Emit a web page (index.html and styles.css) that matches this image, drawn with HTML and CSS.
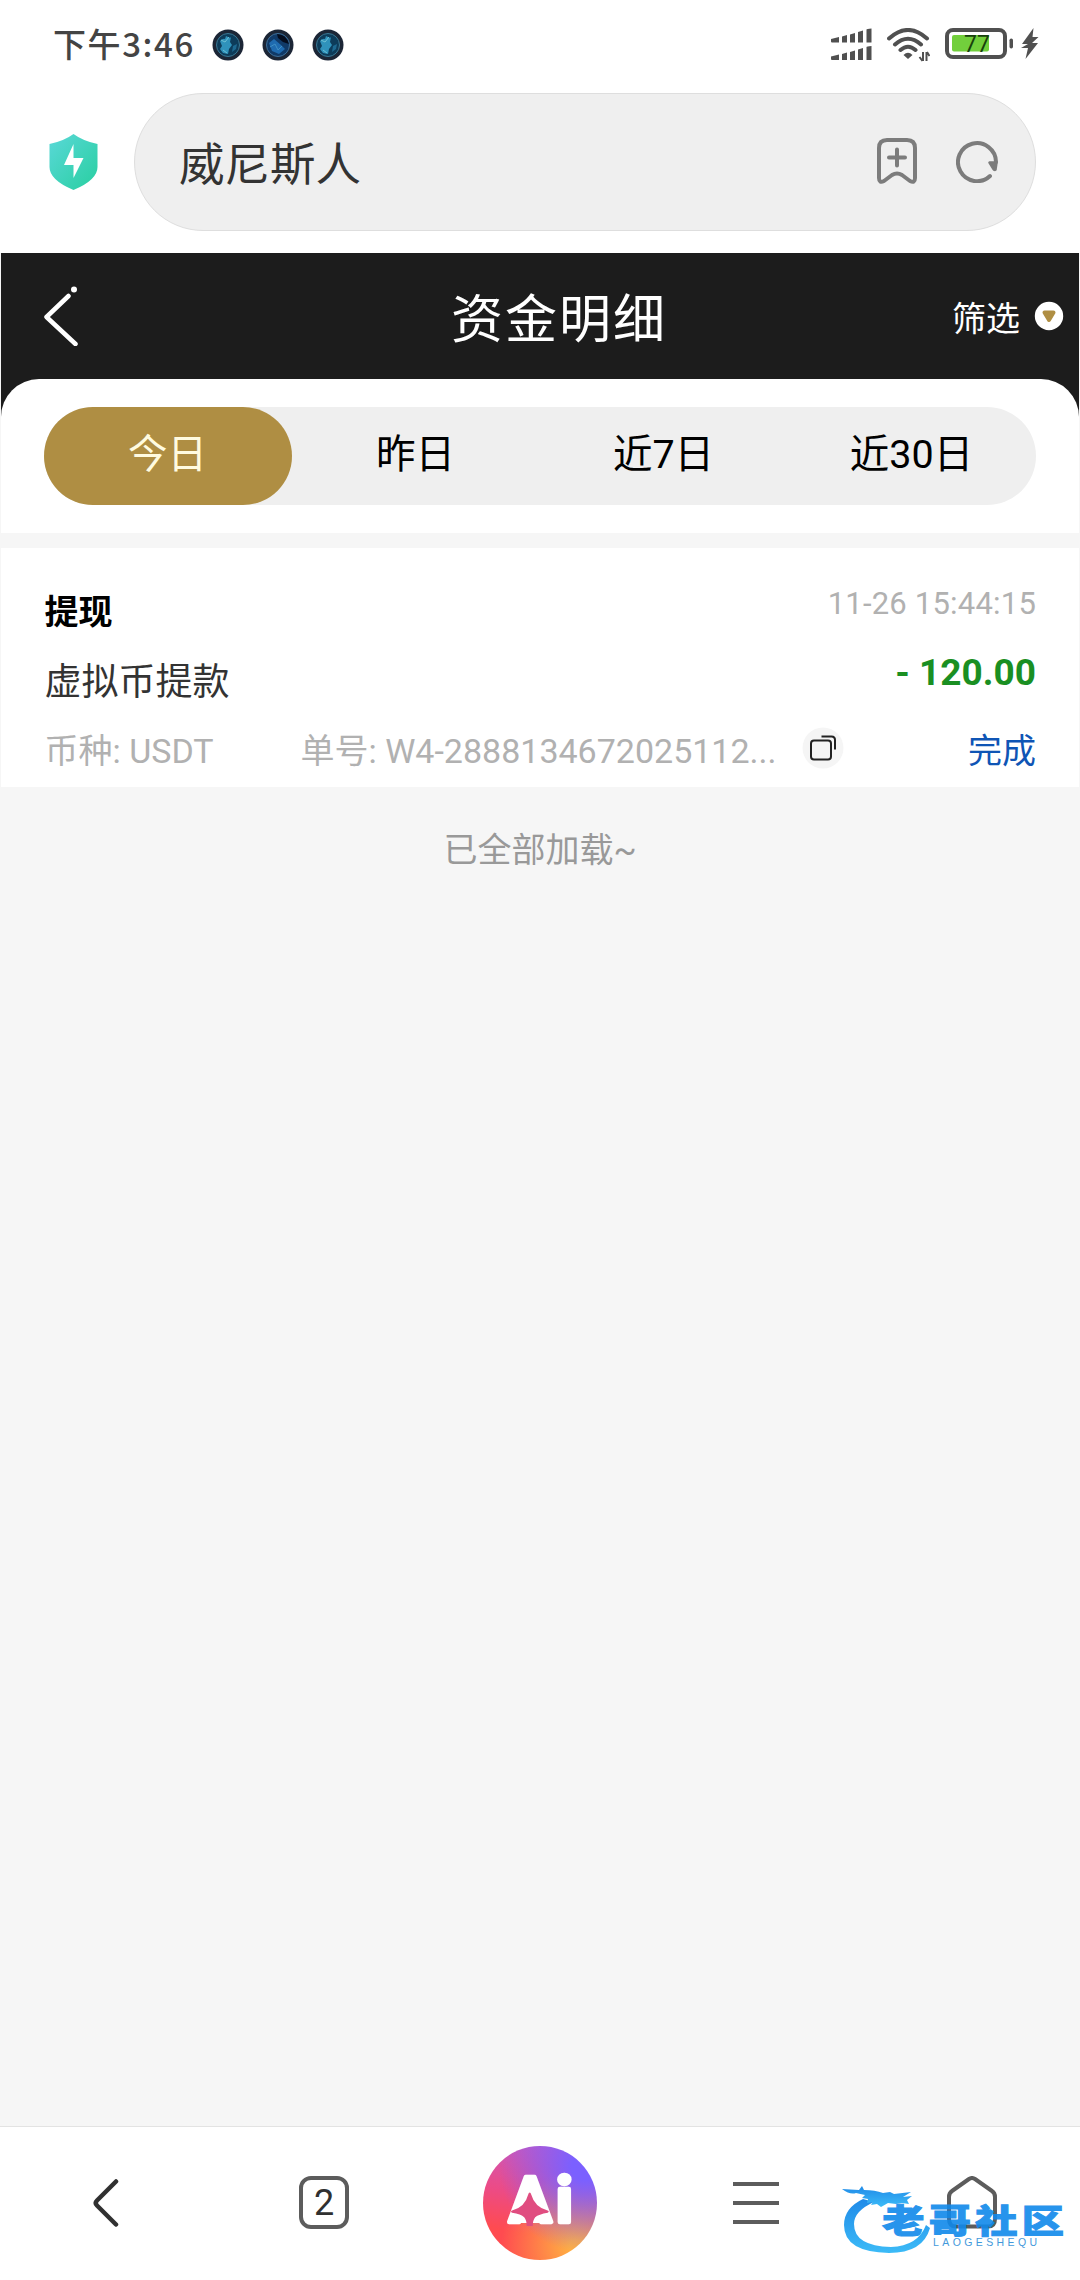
FILE: index.html
```
<!DOCTYPE html>
<html lang="zh-CN">
<head>
<meta charset="utf-8">
<title>资金明细</title>
<meta name="viewport" content="width=device-width,initial-scale=1">
<link rel="stylesheet" href="styles.css">
</head>
<body>
<div class="statusbar">
  <span class="time">下午3:46</span>
  <div class="notices">
    <svg class="coin" viewBox="0 0 32 32"><circle cx="16" cy="16" r="15.5" fill="#1c2636"/><circle cx="16" cy="16" r="11.5" fill="#0d3c5a" stroke="#3a7894" stroke-width="1"/><path d="M8 12q3-3 5-2l1-3 4 2 1-1-1 5 2 3-3 4-1 5-5-1-3-4 2-3z" fill="#2f92bb"/><path d="M21 17l4-2-1 5-4 3z" fill="#1d6890"/><path d="M9 11l4 2 4-5M11 21l4 3" stroke="#6cc0d4" fill="none"/></svg>
    <svg class="coin" viewBox="0 0 32 32"><circle cx="16" cy="16" r="15.5" fill="#1c2636"/><circle cx="16" cy="16" r="11.5" fill="#103a68" stroke="#3f6f98" stroke-width="1"/><path d="M15 5q9 0 12 10l-6-2-5-4z" fill="#050d1e"/><path d="M7 14l5-4 7 6 4 4-6 5-7-3z" fill="#1f6bb0"/><path d="M8 18l5-3 3 6 4-4" stroke="#3f8fc4" fill="none"/></svg>
    <svg class="coin" viewBox="0 0 32 32"><circle cx="16" cy="16" r="15.5" fill="#1c2636"/><circle cx="16" cy="16" r="11.5" fill="#0d3c5a" stroke="#3a7894" stroke-width="1"/><path d="M8 12q3-3 5-2l1-3 4 2 1-1-1 5 2 3-3 4-1 5-5-1-3-4 2-3z" fill="#2f92bb"/><path d="M21 17l4-2-1 5-4 3z" fill="#1d6890"/><path d="M9 11l4 2 4-5M11 21l4 3" stroke="#6cc0d4" fill="none"/></svg>
  </div>
  <div class="system">
    <svg class="signal" viewBox="0 0 41 32" fill="#505050">
      <path id="bars" d="M0 11l8-2v5.500H1q-1 0-1-1zM11 8.500l5-1.500v7.500h-5zM19 6.500l5-1.500v9.500h-5zM27 4l5-1.500v12h-5zM35.500 1.500q0-.5 5-1v14h-5z"/>
      <use href="#bars" y="17.500"/>
    </svg>
    <svg class="wifi" viewBox="0 0 43 34" fill="none" stroke="#505050" stroke-width="4" stroke-linecap="round">
      <path d="M2 10.500Q21 -6.500 40 10.500M8 16.500Q21 5 34 16.500M13.500 22Q21 15.500 28.500 22"/>
      <path d="M21 31l-4.500-4q4.500-4.500 9 0z" fill="#505050" stroke="none"/>
      <path d="M36 24v9M35.500 33l-3-4M39.500 33v-9M40 24l2.500 4" stroke-width="2" stroke-linecap="butt"/>
    </svg>
    <svg class="battery" viewBox="0 0 69 32">
      <rect x="2" y="2" width="58" height="27" rx="6" fill="none" stroke="#505050" stroke-width="4"/>
      <rect x="7" y="7" width="37" height="16.500" rx="2" fill="#72cf3c"/>
      <rect x="64.500" y="10.500" width="3.500" height="10" rx="1.700" fill="#505050"/>
      <text x="19" y="24" class="level">77</text>
    </svg>
    <svg class="charge" viewBox="0 0 18 32"><path d="M12.500 0L1 16h6L0 20h7L4.500 31 17 15h-6l6.500-6H11.500z" fill="#505050"/></svg>
  </div>
</div>

<div class="browser">
  <svg class="shield" viewBox="0 0 49 56">
    <defs><linearGradient id="mint" x1="0" y1="0" x2="1" y2="1"><stop offset="0" stop-color="#5ad8d8"/><stop offset="1" stop-color="#28cfa0"/></linearGradient></defs>
    <path d="M24.500 0Q34 7 48.500 10v23q0 13-24 23Q.5 46 .5 33V10Q15 7 24.500 0z" fill="url(#mint)"/>
    <path d="M24.500 10L15 31h9.500v13L34.500 24H24.500z" fill="#fff"/>
  </svg>
  <div class="address">
    <span>威尼斯人</span>
    <svg class="mark" viewBox="0 0 40 46" fill="none" stroke="#7c7c7c" stroke-width="4" stroke-linecap="round" stroke-linejoin="round">
      <path d="M2 10q0-8 8-8h20q8 0 8 8v30q0 5.500-5 3l-8-6q-5-3-10 0l-8 6q-5 2.500-5-3zM20 11.500v16M12 19.500h16"/>
    </svg>
    <svg class="reload" viewBox="0 0 43 43" fill="none" stroke="#7c7c7c" stroke-width="4" stroke-linecap="round">
      <path d="M34 36A19 19 0 1 1 40 22"/>
      <path d="M33.500 22.500h7l-1 7q-1 1-2-.5z" fill="#7c7c7c" stroke-width="2.500" stroke-linejoin="round"/>
    </svg>
  </div>
</div>

<main class="page">
  <header class="topbar">
    <svg class="back" viewBox="0 0 36 60" fill="none" stroke="#fff" stroke-width="4.500" stroke-linecap="round" stroke-linejoin="round"><path d="M25.500 10L3.500 31l29 27"/><circle cx="31" cy="3.500" r="3" fill="#fff" stroke="none"/></svg>
    <h1>资金明细</h1>
    <div class="filter">筛选
      <svg viewBox="0 0 30 30"><circle cx="15" cy="15" r="14.200" fill="#fff"/><path d="M10.500 11.500h9L15 19z" fill="#af8e43" stroke="#af8e43" stroke-width="4" stroke-linejoin="round"/></svg>
    </div>
  </header>
  <div class="tabs-wrap">
    <nav class="tabs">
      <a class="active">今日</a><a>昨日</a><a>近7日</a><a>近30日</a>
    </nav>
  </div>
  <section class="record">
    <div class="main">
      <div class="left">
        <div class="type">提现</div>
        <div class="desc">虚拟币提款</div>
      </div>
      <div class="right">
        <div class="date">11-26 15:44:15</div>
        <div class="amount">- 120.00</div>
      </div>
    </div>
    <div class="meta">
      <span class="coin-type">币种: USDT</span>
      <span class="order">单号: W4-2888134672025112...</span>
      <svg class="copy" viewBox="0 0 42 42"><circle cx="21" cy="21" r="20.500" fill="#f5f5f5"/><g fill="none" stroke="#222" stroke-width="2"><rect x="9" y="13.500" width="20" height="19" rx="3"/><path d="M19.500 9.500h10q3.500 0 3.500 3.500v9.500"/></g></svg>
      <span class="state">完成</span>
    </div>
  </section>
  <p class="end">已全部加载~</p>
</main>

<footer class="toolbar">
  <div><svg class="prev" viewBox="0 0 26 50" fill="none" stroke="#303030" stroke-width="4.500" stroke-linecap="round"><path d="M23 3.500L4 22.500q-2.500 2.500 0 5L23 46.500"/></svg></div>
  <div><span class="count">2</span></div>
  <div>
    <div class="ai">
      <svg viewBox="0 0 114 114">
        <path d="M46.700 36L28 77h38z" fill="#fff"/>
        <text x="26" y="76" class="ai-text">A</text>
        <text x="73" y="76" class="ai-text">i</text>
        <path d="M46.700 46.500q1 0 1.500 2 3.500 13 17 16.200 1.500 1-.5 2-9 1.500-12.500 4.500-2.500 3-2.500 8.800h-6q0-5.800-2.500-8.800Q38 68 29 66.700q-2-1-.5-2 13.500-3.200 16.700-16.200.5-2 1.500-2z" fill="#e04d80"/>
      </svg>
    </div>
  </div>
  <div><span class="menu"></span></div>
  <div><svg class="home" viewBox="0 0 50 53" fill="none" stroke="#5c5c5c" stroke-width="4"><path d="M2 21q0-4 3-6L22 3q3-2 6 0l17 12q3 2 3 6v22q0 7.500-7 7.500H9q-7 0-7-7.500z"/></svg></div>
</footer>

<svg class="watermark" viewBox="0 0 238 72">
  <defs><linearGradient id="sky" x1="0" y1="0" x2="0" y2="1"><stop offset="0" stop-color="#087ee6"/><stop offset="1" stop-color="#27b4f7"/></linearGradient></defs>
  <g fill="url(#sky)">
    <path d="M21 15Q2 24 2 41q0 27 45 28Q81 69 88 44l-4-3Q76 62 49 63 12 62 12 40q0-13 20-22z"/>
    <path d="M0 5l17 1 3-4 2 4q11 0 19 3l7-1 4 2 17-2-8 5 9-1-5 4 2 4-7-1-6 1-8-1-7 4-4-3-6 1 2-3-6 1 1-4-6-1 3-3-9-2Q8 11 0 5z"/>
  </g>
  <text x="31.500" y="49" class="wm-name" transform="scale(1.28 1)">老哥社区</text>
  <text x="91" y="62" class="wm-sub">LAOGESHEQU</text>
</svg>
</body>
</html>
```
FILE: styles.css
```
*{box-sizing:border-box}
body{margin:0;height:2280px;display:flex;flex-direction:column;background:#fff;color:#000;font-family:Roboto,"Noto Sans CJK SC",sans-serif;overflow:hidden;position:relative}
svg{display:block;flex:none}

/* phone status bar */
.statusbar{height:93px;padding:0 41px 4px 53px;display:flex;align-items:center}
.time{font:500 33px/40px "Noto Sans CJK SC",sans-serif;color:#444;letter-spacing:1.600px;margin-top:-3px}
.notices{display:flex;gap:18px;margin-left:17px}
.coin{width:32px;height:32px}
.system{display:flex;align-items:flex-start;margin-left:auto}
.signal{width:41px;height:32px}
.wifi{width:43px;height:34px;margin-left:15px}
.battery{width:69px;height:32px;margin-left:15px}
.level{font:400 23px Roboto,sans-serif;fill:#17400c}
.charge{width:18px;height:32px;margin-left:7px}

/* address bar */
.browser{height:160px;padding:0 44px 0 49px;display:flex;align-items:flex-start}
.shield{width:49px;height:56px;margin-top:41px}
.address{flex:1;height:138px;margin-left:36px;padding:0 36px 2px 44px;border:1px solid #dedede;border-radius:69px;background:#efefef;display:flex;align-items:center;font-size:45.500px;color:#333}
.address span{flex:1}
.mark{width:40px;height:46px}
.reload{width:43px;height:43px;margin-left:39px}

.page{flex:1;background:#f6f6f6}
.topbar{height:166px;margin:0 1px -40px;padding:0 15px 40px 42px;background:#1c1c1c;color:#fff;display:flex;align-items:center;justify-content:space-between}
.back{width:36px;height:60px}
h1{margin:0 0 0 87px;font-size:52px;font-weight:400;line-height:70px;letter-spacing:2px;padding-top:10px}
.filter{display:flex;align-items:center;gap:14px;font-size:34px;line-height:44px;padding-top:6px}
.filter svg{width:30px;height:30px;margin-top:-6px}

.tabs-wrap{height:154px;margin:0 1px;padding:28px 43px 0;background:#fff;border-radius:38px 38px 0 0;position:relative}
.tabs{display:flex;height:98px;border-radius:49px;background:#efefef}
.tabs a{flex:1;border-radius:49px;text-align:center;font-size:39.500px;line-height:96px;text-indent:-1px}
.tabs .active{background:#af8e43;color:#fffbe0}

.record{height:239px;margin:15px 1px 0;padding:31px 43px 0 43.500px;background:#fff}
.main{display:flex;justify-content:space-between}
.type,.desc{line-height:69px}
.type{font-size:34px;font-weight:700;margin-top:-1px}
.desc{font-size:37px;color:#333;padding-top:1px}
.right{text-align:right}
.date{font-size:31px;line-height:51px;color:#b1b1b1;letter-spacing:.2px;margin-top:-1px}
.amount{font-size:37px;font-weight:700;line-height:87px;color:#1a8f22}
.meta{display:flex;align-items:center;height:69px;padding-bottom:7px;font-size:34px;color:#b1b1b1;white-space:nowrap}
.coin-type{width:256px}
.order{width:501px}
.copy{width:42px;height:42px}
.state{margin-left:auto;color:#0f55b5}
.end{margin:40px 0 0;text-align:center;font-size:34px;line-height:46px;color:#999}

/* browser toolbar */
.toolbar{height:154px;padding-bottom:2px;border-top:1px solid #e3e3e3;background:#fff;display:grid;grid-template-columns:repeat(5,1fr)}
.toolbar>div{display:flex;align-items:center;justify-content:center}
.prev{width:26px;height:50px;margin-left:-4px}
.count{width:50px;height:53px;border:4px solid #5c5c5c;border-radius:12px;text-align:center;font-size:36px;line-height:46px;color:#303030}
.ai{width:114px;height:114px;border-radius:50%;background:radial-gradient(circle at 90% 18%,#7b60ff 0 10%,rgba(123,96,255,0) 62%),radial-gradient(circle at 82% 88%,#ffae42 0 5%,rgba(255,174,66,0) 55%),linear-gradient(190deg,#c45ac8 0%,#ec4b86 45%,#ff4b50 75%)}
.ai-text{font:700 63px Roboto,sans-serif;fill:#fff;stroke:#fff;stroke-width:4.500px;stroke-linejoin:round}
.menu{width:46px;height:42px;background:linear-gradient(#5c5c5c,#5c5c5c) 0 0/100% 4px no-repeat,linear-gradient(#5c5c5c,#5c5c5c) 0 19px/100% 4px no-repeat,linear-gradient(#5c5c5c,#5c5c5c) 0 38px/100% 4px no-repeat}
.home{width:50px;height:53px}

.watermark{position:absolute;left:842px;top:2184px;width:238px;height:72px;opacity:.9}
.wm-name{font:900 33px "Noto Sans CJK SC",sans-serif;letter-spacing:3.300px;fill:#1089ea;stroke:#1089ea;stroke-width:1px}
.wm-sub{font:10.500px "Liberation Sans",sans-serif;letter-spacing:3.400px;fill:#2f8fd8}
```
